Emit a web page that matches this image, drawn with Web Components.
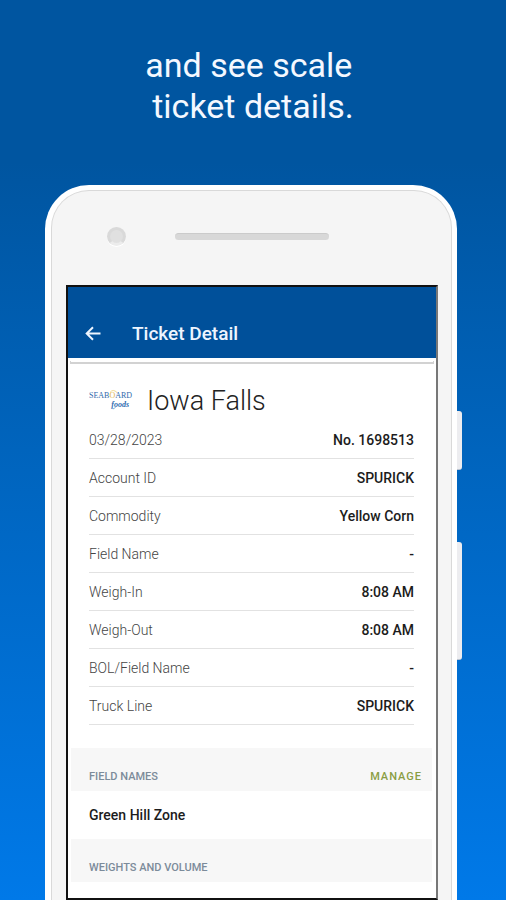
<!DOCTYPE html>
<html lang="en">
<head>
<meta charset="utf-8">
<meta name="viewport" content="width=device-width, initial-scale=1">
<title>Ticket Detail</title>
<style>
  html { height: 100%; }
  body {
    margin: 0;
    min-height: 100%;
    display: flex;
    font-family: Roboto, "Liberation Sans", sans-serif;
    background: linear-gradient(#0055a0 0%, #0055a0 18%, #0064bd 50%, #0079e8 100%);
  }
</style>
</head>
<body>
<promo-page></promo-page>

<template id="promo-page">
  <style>
    :host { flex: 1; min-width: 0; display: flex; flex-direction: column; }
    h1 {
      margin: 0;
      padding: 45px 16px 58px;
      font-size: 34px;
      line-height: 41px;
      font-weight: 400;
      text-align: center;
      color: #f4f8ff;
    }
    phone-frame { flex: 1; margin: 0 49px 0 45px; }
    app-bar { flex: none; }
    .strip { height: 1px; margin: 3px 2px 0; border: solid #d2d2d2; border-width: 0 1px 2px; }
    .detail { padding: 19px 22px 23px 21px; }
    dl { margin: 2px 0 0; }
  </style>
  <h1>and see scale&nbsp;<br>ticket details.</h1>
  <phone-frame>
    <app-bar>Ticket Detail</app-bar>
    <div class="strip"></div>
    <div class="detail">
      <ticket-title>Iowa Falls</ticket-title>
      <dl>
        <detail-row label="03/28/2023">No. 1698513</detail-row>
        <detail-row label="Account ID">SPURICK</detail-row>
        <detail-row label="Commodity">Yellow Corn</detail-row>
        <detail-row label="Field Name">-</detail-row>
        <detail-row label="Weigh-In">8:08 AM</detail-row>
        <detail-row label="Weigh-Out">8:08 AM</detail-row>
        <detail-row label="BOL/Field Name">-</detail-row>
        <detail-row label="Truck Line">SPURICK</detail-row>
      </dl>
    </div>
    <section-header action="Manage">Field Names</section-header>
    <field-item>Green Hill Zone</field-item>
    <section-header>Weights and Volume</section-header>
  </phone-frame>
</template>

<template id="phone-frame">
  <style>
    :host {
      position: relative;
      display: flex;
      flex-direction: column;
      box-sizing: border-box;
      padding: 5px 5px 0 6px;
      border-radius: 44px 44px 0 0;
      background: #fff;
    }
    .face {
      flex: 1;
      display: flex;
      flex-direction: column;
      box-sizing: border-box;
      padding: 0 13px 0 14px;
      border: solid #d9d9d9;
      border-width: 1px 1px 0;
      border-radius: 38px 38px 0 0;
      background: #f5f5f5;
    }
    .top {
      display: grid;
      grid-template-columns: 1fr 154px 1fr;
      align-items: center;
      box-sizing: border-box;
      height: 94px;
      padding: 0 1px 4px 0;
    }
    .camera {
      box-sizing: border-box;
      width: 19px;
      height: 19px;
      margin-left: 41px;
      border: 3px solid #d9d9d9;
      border-bottom-color: #ececec;
      border-radius: 50%;
      background: #e0e0e0;
      box-shadow: 0 1px 0 #fff;
    }
    .speaker { height: 7px; border-radius: 4px; background: #d8d8d8; border-top: 1px solid #cbcbcb; box-sizing: border-box; }
    .screen {
      flex: 1;
      display: flex;
      flex-direction: column;
      border: 2px solid #111;
      border-right-color: #777;
      background: #fff;
    }
    .key {
      position: absolute;
      left: 100%;
      width: 5px;
      border-radius: 0 3px 3px 0;
      background: #ededf0;
      border-bottom: 1px solid #bcc4d0;
      box-sizing: border-box;
    }
    .power { top: 226px; height: 59px; }
    .volume { top: 357px; height: 118px; }
  </style>
  <div class="face">
    <div class="top"><span class="camera"></span><span class="speaker"></span></div>
    <div class="screen"><slot></slot></div>
  </div>
  <span class="key power"></span>
  <span class="key volume"></span>
</template>

<template id="app-bar">
  <style>
    :host {
      display: flex;
      align-items: flex-end;
      gap: 28px;
      box-sizing: border-box;
      height: 71px;
      padding: 0 14px 12px;
      background: #00509a;
      color: #eef5ff;
    }
    button {
      display: grid;
      place-items: center;
      width: 22px;
      height: 24px;
      padding: 0;
      border: 0;
      background: none;
      color: inherit;
    }
    h2 { margin: 0; font-size: 19px; line-height: 24px; font-weight: 500; }
  </style>
  <button type="button" aria-label="Back">
    <svg width="16" height="16" viewBox="0 0 16 16" fill="none" stroke="currentColor" stroke-width="2"><path d="M15.5 7.500H2M8 1.300 1.700 7.500l6.300 6.200"/></svg>
  </button>
  <h2><slot></slot></h2>
</template>

<template id="ticket-title">
  <style>
    :host { display: flex; align-items: center; gap: 14px; height: 36px; }
    svg { flex: none; }
    h3 { margin: 0; font-size: 27px; line-height: 36px; font-weight: 300; color: #222; }
  </style>
  <svg width="44" height="24" viewBox="0 0 44 24" role="img" aria-label="Seaboard Foods" font-family="Liberation Serif, serif" font-size="8">
    <path d="M21 3.500q3-4 7 0" fill="none" stroke="#f3d98f"/>
    <text x="0" y="9" fill="#2f69ab">SEAB<tspan fill="#e3b44c">O</tspan>ARD</text>
    <text x="40" y="18" font-style="italic" font-weight="700" fill="#2f6db0" text-anchor="end">foods</text>
    <path d="M23 19.500q2 1.500 4-2" fill="none" stroke="#7fb2dc"/>
  </svg>
  <h3><slot></slot></h3>
</template>

<template id="detail-row">
  <style>
    :host {
      display: flex;
      justify-content: space-between;
      align-items: center;
      box-sizing: border-box;
      height: 38px;
      border-bottom: 1px solid #e2e2e2;
      font-size: 14px;
      line-height: 20px;
    }
    dt { font-weight: 300; color: #444; }
    dd { margin: 0; font-weight: 500; color: #1c1c1c; }
  </style>
  <dt></dt>
  <dd><slot></slot></dd>
</template>

<template id="section-header">
  <style>
    :host {
      display: flex;
      justify-content: space-between;
      align-items: flex-end;
      box-sizing: border-box;
      height: 43px;
      margin: 0 4px 0 3px;
      padding: 0 10px 7px 18px;
      background: #f7f7f7;
      font-size: 11px;
      line-height: 14px;
      text-transform: uppercase;
    }
    h4 { margin: 0; font-size: 11px; font-weight: 500; color: #7c8b9a; }
    button {
      padding: 0;
      border: 0;
      background: none;
      font: 500 11px/14px Roboto, "Liberation Sans", sans-serif;
      letter-spacing: 1px;
      text-transform: inherit;
      color: #8a9d43;
    }
    button[hidden] { display: none; }
  </style>
  <h4><slot></slot></h4>
  <button type="button" hidden></button>
</template>

<template id="field-item">
  <style>
    :host {
      display: flex;
      align-items: center;
      height: 48px;
      padding: 0 21px;
      font-size: 14px;
      line-height: 20px;
      font-weight: 500;
      color: #1c1c1c;
    }
  </style>
  <slot></slot>
</template>

<script>
  class TemplateElement extends HTMLElement {
    constructor() {
      super();
      const template = document.getElementById(this.localName);
      this.attachShadow({ mode: "open" }).append(template.content.cloneNode(true));
    }
  }

  class DetailRow extends TemplateElement {
    connectedCallback() {
      this.shadowRoot.querySelector("dt").textContent = this.getAttribute("label");
    }
  }

  class SectionHeader extends TemplateElement {
    connectedCallback() {
      const action = this.getAttribute("action");
      const button = this.shadowRoot.querySelector("button");
      button.hidden = !action;
      button.textContent = action || "";
    }
  }

  customElements.define("phone-frame", class extends TemplateElement {});
  customElements.define("app-bar", class extends TemplateElement {});
  customElements.define("ticket-title", class extends TemplateElement {});
  customElements.define("detail-row", DetailRow);
  customElements.define("section-header", SectionHeader);
  customElements.define("field-item", class extends TemplateElement {});
  customElements.define("promo-page", class extends TemplateElement {});
</script>
</body>
</html>
